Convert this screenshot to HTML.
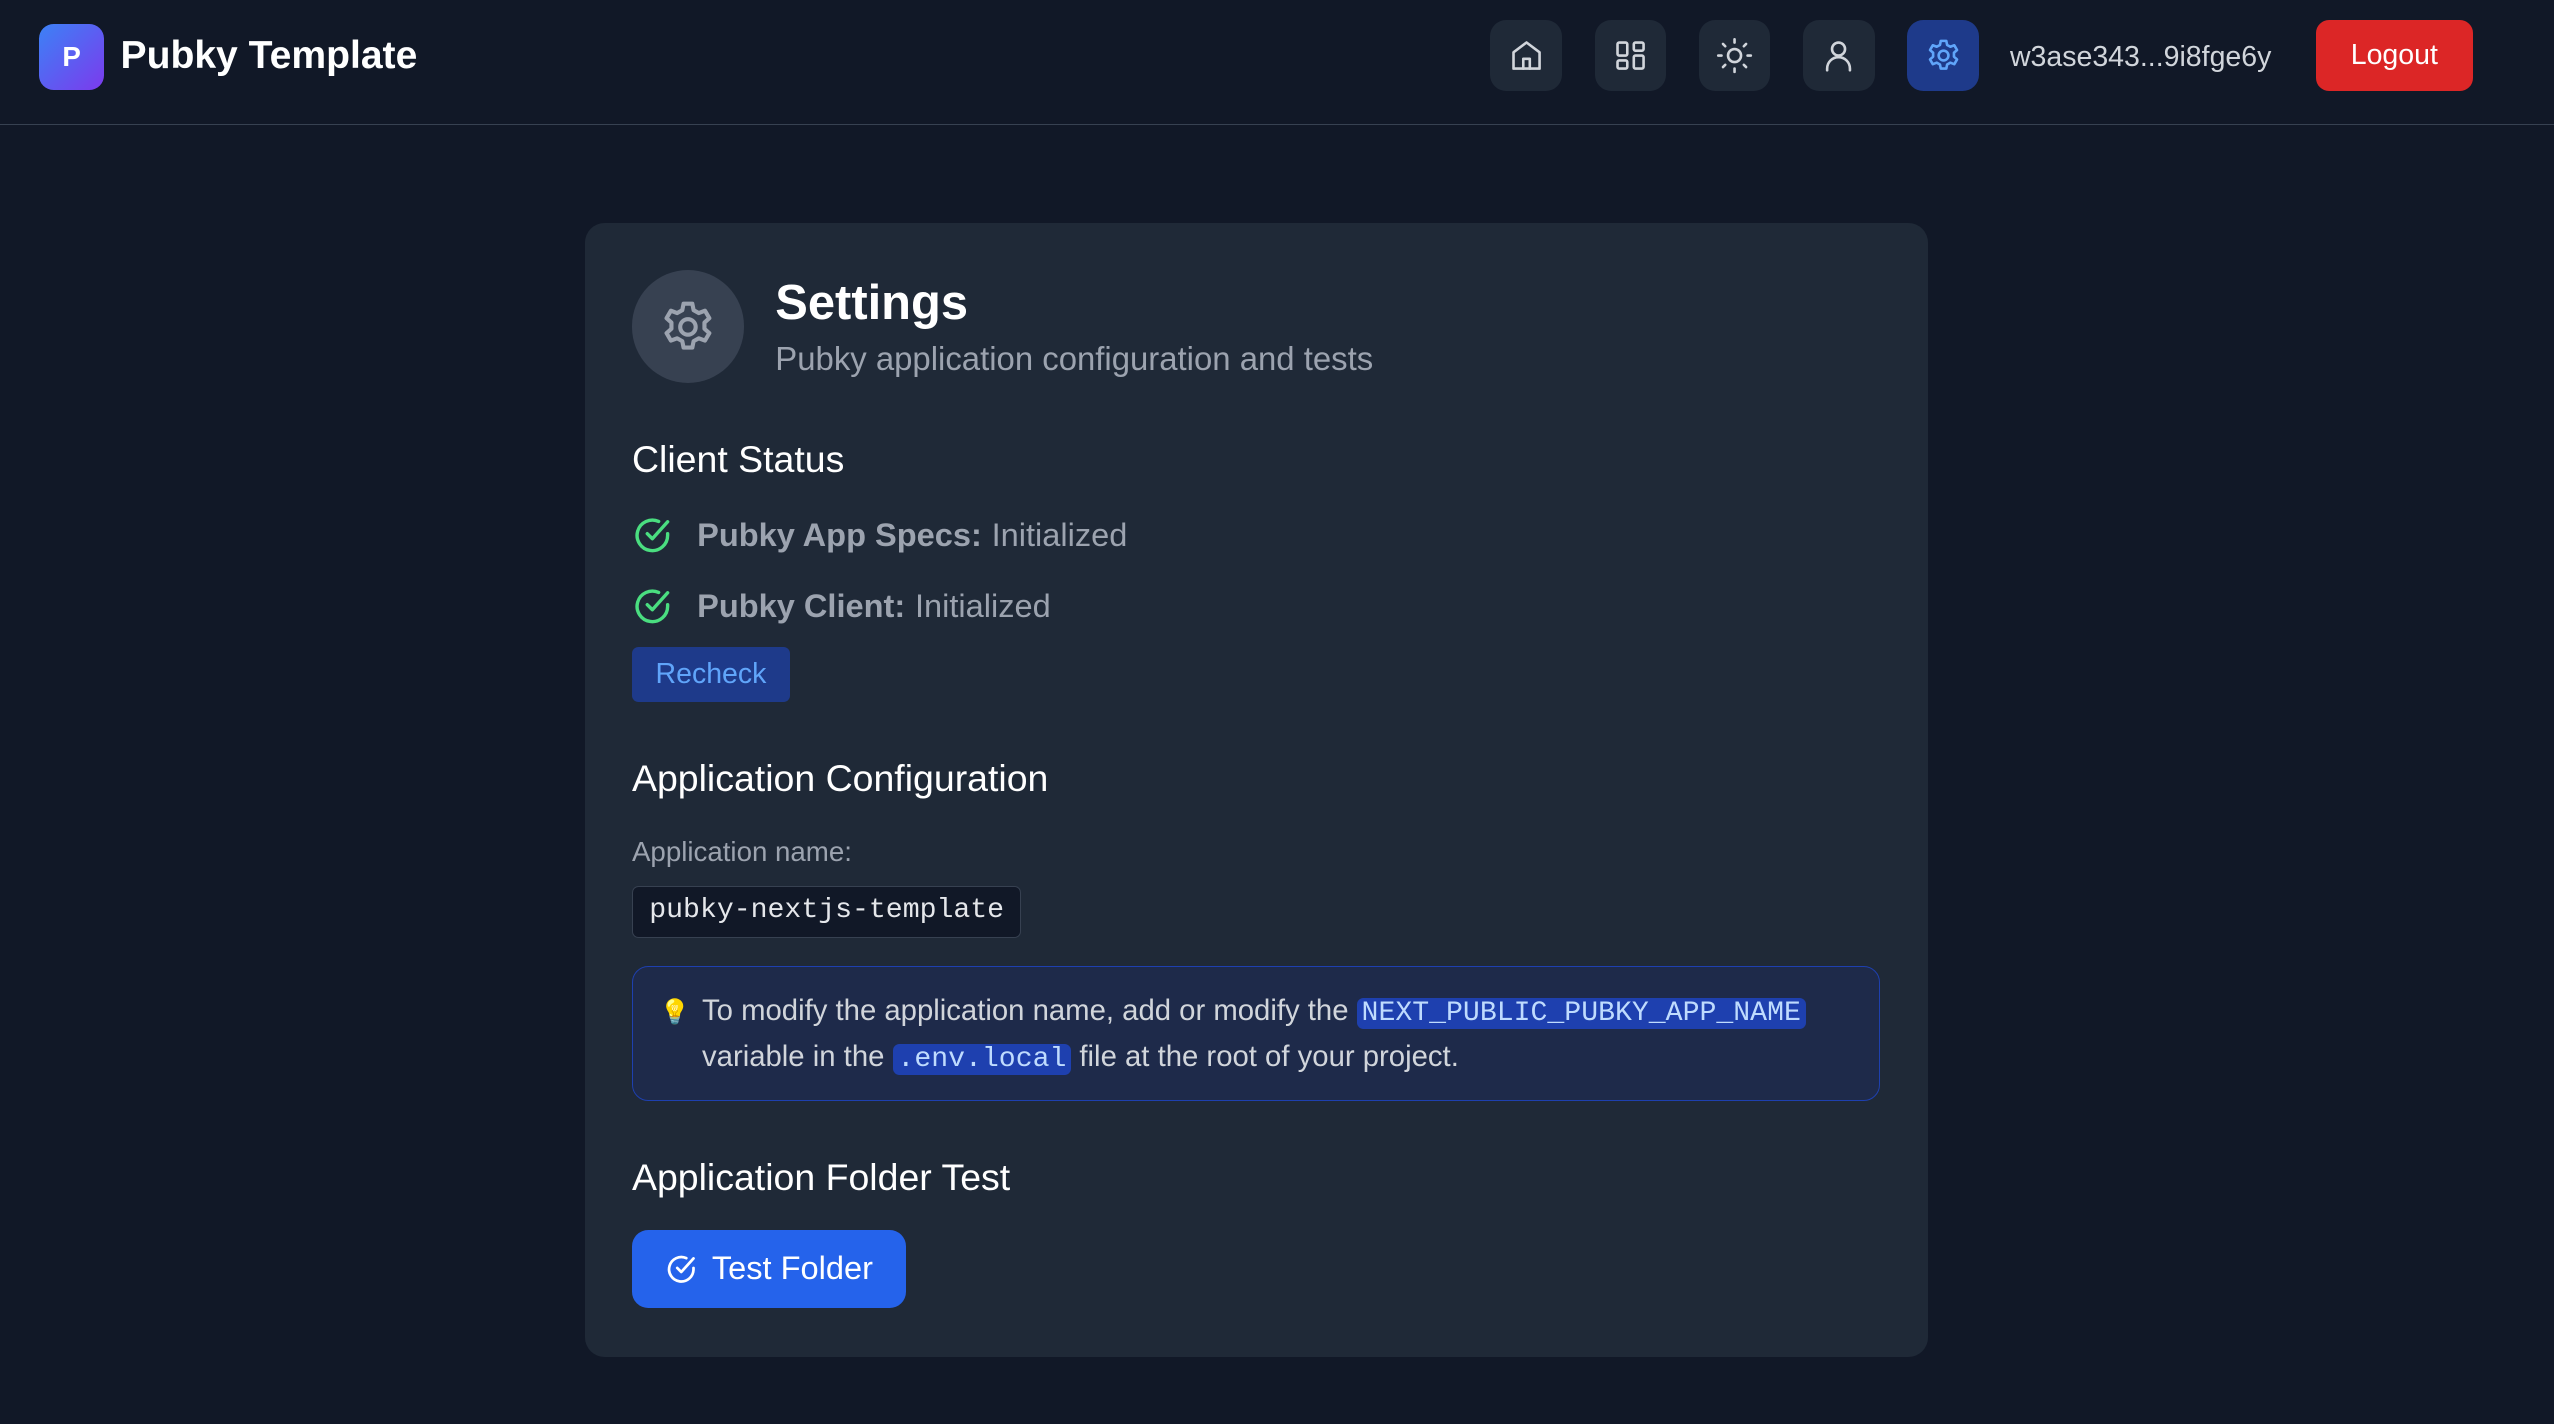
<!DOCTYPE html>
<html><head><meta charset="utf-8"><style>
*{box-sizing:border-box;margin:0;padding:0}
html,body{width:2554px;height:1424px;overflow:hidden;background:#111827}
#root{zoom:1.6288;width:1568px;height:874px;position:relative;font-family:"Liberation Sans",sans-serif;color:#fff}
.a{position:absolute}
.hdr{left:0;top:0;width:1568px;height:77px;border-bottom:1px solid #374151}
.ib{width:44px;height:44px;top:12px;border-radius:10px;background:#1f2937;display:flex;align-items:center;justify-content:center}
.ib svg{width:24px;height:24px;fill:none;stroke:#d1d5db;stroke-width:1.6;stroke-linecap:round;stroke-linejoin:round}
.card{left:359px;top:137px;width:825px;height:696px;background:#1f2937;border-radius:12px}
h3{position:absolute;font-size:23px;font-weight:normal;color:#fff}
.row{position:absolute;left:388px;font-size:20px;color:#9ca3af;display:flex;align-items:center}
.row b{margin:0 6px 0 15px}
code{font-family:"Liberation Mono",monospace;font-size:17.3px;background:#1e40af;color:#bfdbfe;border-radius:4px;padding:0 3px}
</style></head><body><div id="root">
<div class="a hdr"></div>
<div class="a" style="left:24px;top:15px;width:40px;height:40px;border-radius:9px;background:linear-gradient(135deg,#3b82f6,#7c3aed);font-weight:bold;font-size:17px;display:flex;align-items:center;justify-content:center">P</div>
<div class="a" style="left:74px;top:21px;font-size:24px;font-weight:bold">Pubky Template</div>
<div class="a ib" style="left:915px"><svg viewBox="0 0 24 24"><path d="M4 10l8-6 8 6v10H4z"/><path d="M10 20v-6h4v6"/></svg></div>
<div class="a ib" style="left:979px"><svg viewBox="0 0 24 24"><rect x="4" y="4" width="6" height="8" rx="1"/><rect x="14" y="4" width="6" height="5" rx="1"/><rect x="14" y="12" width="6" height="8" rx="1"/><rect x="4" y="15" width="6" height="5" rx="1"/></svg></div>
<div class="a ib" style="left:1043px"><svg viewBox="0 0 24 24"><circle cx="12" cy="12" r="4"/><path d="M12 2v2M12 20v2M2 12h2M20 12h2M4.9 4.9l1.4 1.4M17.7 17.7l1.4 1.4M4.9 19.1l1.4-1.4M17.7 6.3l1.4-1.4"/></svg></div>
<div class="a ib" style="left:1107px"><svg viewBox="0 0 24 24"><circle cx="12" cy="8" r="4"/><path d="M5 21v-1a7 7 0 0 1 14 0v1"/></svg></div>
<div class="a ib" style="left:1171px;background:#1e3a8a"><svg viewBox="0 0 24 24" style="stroke:#60a5fa"><circle cx="12" cy="12" r="3"/><path d="M10.3 3h3.4l.5 2.5 2 1.1 2.4-.9 1.7 2.9-1.9 1.7v2.4l1.9 1.7-1.7 2.9-2.4-.9-2 1.1-.5 2.5h-3.4l-.5-2.5-2-1.1-2.4.9-1.7-2.9 1.9-1.7v-2.4L3.7 8.6l1.7-2.9 2.4.9 2-1.1z"/></svg></div>
<div class="a" style="left:1234px;top:25px;font-size:17.5px;color:#d1d5db">w3ase343...9i8fge6y</div>
<div class="a" style="left:1422px;top:12px;width:96px;height:44px;border-radius:8px;background:#dc2626;font-size:17.5px;display:flex;align-items:center;justify-content:center">Logout</div>

<div class="a card"></div>
<div class="a" style="left:388px;top:166px;width:69px;height:69px;border-radius:50%;background:#374151;display:flex;align-items:center;justify-content:center"><svg viewBox="0 0 24 24" width="38" height="38" style="fill:none;stroke:#9ca3af;stroke-width:1.6;stroke-linejoin:round"><circle cx="12" cy="12" r="3"/><path d="M10.3 3h3.4l.5 2.5 2 1.1 2.4-.9 1.7 2.9-1.9 1.7v2.4l1.9 1.7-1.7 2.9-2.4-.9-2 1.1-.5 2.5h-3.4l-.5-2.5-2-1.1-2.4.9-1.7-2.9 1.9-1.7v-2.4L3.7 8.6l1.7-2.9 2.4.9 2-1.1z"/></svg></div>
<div class="a" style="left:476px;top:169px;font-size:30px;font-weight:bold">Settings</div>
<div class="a" style="left:476px;top:209px;font-size:20.2px;color:#9ca3af">Pubky application configuration and tests</div>
<h3 style="left:388px;top:269px">Client Status</h3>
<div class="row" style="top:316px"><svg width="25" height="25" viewBox="0 0 24 24" fill="none" stroke="#4ade80" stroke-width="2" stroke-linecap="round" stroke-linejoin="round"><path d="M21 11v1a9 9 0 1 1-5.3-8.2"/><path d="M21 4L12 14l-3-3"/></svg><b>Pubky App Specs:</b>Initialized</div>
<div class="row" style="top:360px"><svg width="25" height="25" viewBox="0 0 24 24" fill="none" stroke="#4ade80" stroke-width="2" stroke-linecap="round" stroke-linejoin="round"><path d="M21 11v1a9 9 0 1 1-5.3-8.2"/><path d="M21 4L12 14l-3-3"/></svg><b>Pubky Client:</b>Initialized</div>
<div class="a" style="left:388px;top:397px;width:97px;height:34px;border-radius:4px;background:#1e3a8a;color:#60a5fa;font-size:17.5px;display:flex;align-items:center;justify-content:center">Recheck</div>
<h3 style="left:388px;top:465px">Application Configuration</h3>
<div class="a" style="left:388px;top:513px;font-size:17px;color:#9ca3af">Application name:</div>
<div class="a" style="left:388px;top:544px;width:239px;height:32px;border:1px solid #374151;border-radius:4px;background:#111827;font-family:'Liberation Mono',monospace;font-size:17.3px;color:#e5e7eb;padding:5px 10px;white-space:nowrap">pubky-nextjs-template</div>
<div class="a" style="left:388px;top:593px;width:766px;height:83px;border:1px solid #1e40af;border-radius:10px;background:#1e2a4a"></div>
<div class="a" style="left:405px;top:612px;font-size:15px">💡</div>
<div class="a" style="left:431px;top:608px;font-size:18px;line-height:26px;color:#d1d5db;width:720px;white-space:nowrap">To modify the application name, add or modify the <code>NEXT_PUBLIC_PUBKY_APP_NAME</code><br>variable in the <code>.env.local</code> file at the root of your project.</div>
<h3 style="left:388px;top:710px">Application Folder Test</h3>
<div class="a" style="left:388px;top:755px;width:168px;height:48px;border-radius:10px;background:#2563eb;font-size:20px;display:flex;align-items:center;justify-content:center;gap:9px"><svg width="20" height="20" viewBox="0 0 24 24" fill="none" stroke="#fff" stroke-width="2" stroke-linecap="round" stroke-linejoin="round"><path d="M21 11v1a9 9 0 1 1-5.3-8.2"/><path d="M21 4L12 14l-3-3"/></svg>Test Folder</div>
</div></body></html>
